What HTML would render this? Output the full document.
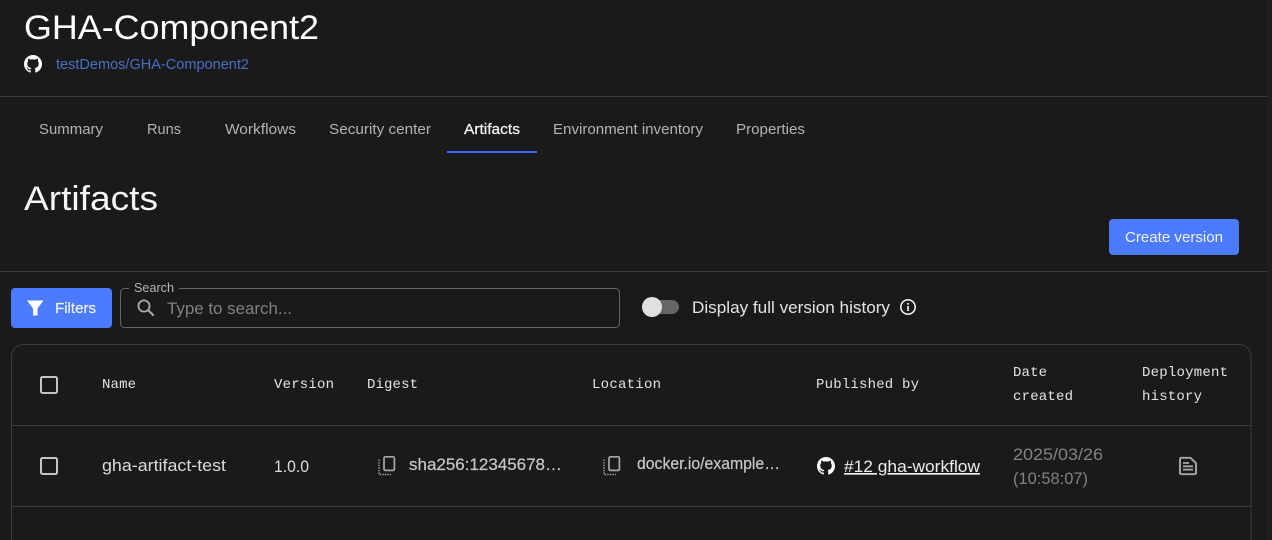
<!DOCTYPE html>
<html lang="en">
<head>
<meta charset="utf-8">
<title>Artifacts</title>
<style>
html,body{margin:0;padding:0;background:#1a1a1a;width:1272px;height:540px;overflow:hidden}
svg{display:block}
text{font-family:"Liberation Sans",Arial,sans-serif}
.m{font-family:"Liberation Mono",monospace;font-size:14px;fill:#e4e4e4}
.tab{font-size:14.7px;fill:#b4b4b4}
.cell{font-size:16.8px;fill:#dcdcdc}
.gray{font-size:16.8px;fill:#828282}
</style>
</head>
<body>
<svg width="1272" height="540" viewBox="0 0 1272 540" xmlns="http://www.w3.org/2000/svg">
<defs>
<symbol id="gh" viewBox="0 0 16 16"><path fill="#fff" d="M8 0C3.58 0 0 3.58 0 8c0 3.54 2.29 6.53 5.47 7.59.4.07.55-.17.55-.38 0-.19-.01-.82-.01-1.49-2.01.37-2.53-.49-2.69-.94-.09-.23-.48-.94-.82-1.13-.28-.15-.68-.52-.01-.53.63-.01 1.08.58 1.23.82.72 1.21 1.87.87 2.33.66.07-.52.28-.87.51-1.07-1.78-.2-3.64-.89-3.64-3.95 0-.87.31-1.59.82-2.15-.08-.2-.36-1.02.08-2.12 0 0 .67-.21 2.2.82.64-.18 1.32-.27 2-.27s1.36.09 2 .27c1.53-1.04 2.2-.82 2.2-.82.44 1.1.16 1.92.08 2.12.51.56.82 1.27.82 2.15 0 3.07-1.87 3.75-3.65 3.95.29.25.54.73.54 1.48 0 1.07-.01 1.93-.01 2.2 0 .21.15.46.55.38A8.013 8.013 0 0016 8c0-4.42-3.58-8-8-8z"/></symbol>
<g id="copy">
<rect x="384" y="456.8" width="10.4" height="13.6" rx="1.4" fill="none" stroke="#a8a8a8" stroke-width="1.7"/>
<path d="M379 459.5V474.5H391" fill="none" stroke="#a8a8a8" stroke-width="1.4" stroke-dasharray="1.4 1.2"/>
</g>
</defs>

<rect x="1267" y="0" width="5" height="540" fill="#1e1f20"/>

<text x="24" y="39" font-size="34.5" fill="#fff" textLength="295" lengthAdjust="spacingAndGlyphs">GHA-Component2</text>
<use href="#gh" x="24" y="55" width="18" height="18"/>
<text x="56" y="69" font-size="14.7" fill="#4a71c6" textLength="193" lengthAdjust="spacingAndGlyphs">testDemos/GHA-Component2</text>

<rect x="0" y="96" width="1267" height="1" fill="#3c3c3c"/>

<text class="tab" x="39" y="134" textLength="64" lengthAdjust="spacingAndGlyphs">Summary</text>
<text class="tab" x="147" y="134" textLength="34" lengthAdjust="spacingAndGlyphs">Runs</text>
<text class="tab" x="225" y="134" textLength="71" lengthAdjust="spacingAndGlyphs">Workflows</text>
<text class="tab" x="329" y="134" textLength="102" lengthAdjust="spacingAndGlyphs">Security center</text>
<text class="tab" x="464" y="134" textLength="56" lengthAdjust="spacingAndGlyphs" style="fill:#f4f4f4;stroke:#f4f4f4;stroke-width:.25">Artifacts</text>
<text class="tab" x="553" y="134" textLength="150" lengthAdjust="spacingAndGlyphs">Environment inventory</text>
<text class="tab" x="736" y="134" textLength="69" lengthAdjust="spacingAndGlyphs">Properties</text>
<rect x="447" y="151" width="90" height="2" fill="#3d69ea"/>

<text x="24" y="210" font-size="34.5" fill="#f6f6f6" textLength="134" lengthAdjust="spacingAndGlyphs">Artifacts</text>

<rect x="1109" y="219" width="130" height="36" rx="4" fill="#4d7bff"/>
<text x="1125" y="242" font-size="14.7" fill="#eef2ff" textLength="98" lengthAdjust="spacingAndGlyphs">Create version</text>

<rect x="0" y="271" width="1267" height="1" fill="#3c3c3c"/>

<rect x="11" y="288" width="101" height="40" rx="4" fill="#4d7bff"/>
<path d="M27 300.5H43.5L37.5 308.5V315.5H33V308.5Z" fill="#fff"/>
<text x="55" y="313" font-size="14.7" fill="#eef2ff" textLength="41" lengthAdjust="spacingAndGlyphs" style="stroke:#eef2ff;stroke-width:.2">Filters</text>

<path d="M129 288.5H124.5a4 4 0 0 0-4 4V323.5a4 4 0 0 0 4 4H615.5a4 4 0 0 0 4-4V292.5a4 4 0 0 0-4-4H179" fill="none" stroke="#666" stroke-width="1"/>
<text x="134" y="292" font-size="12.5" fill="#b4b4b4" textLength="40" lengthAdjust="spacingAndGlyphs">Search</text>
<circle cx="144" cy="306" r="5.6" fill="none" stroke="#aaa" stroke-width="1.8"/>
<path d="M148 310L153.7 315.6" stroke="#aaa" stroke-width="2" fill="none"/>
<text x="167" y="314" font-size="16.8" fill="#828282" textLength="125" lengthAdjust="spacingAndGlyphs">Type to search...</text>

<rect x="642" y="300" width="37" height="14" rx="7" fill="#666"/>
<circle cx="652" cy="307" r="10" fill="#e0e0e0"/>
<text x="692" y="313" font-size="16.8" fill="#e4e4e4" textLength="198" lengthAdjust="spacingAndGlyphs">Display full version history</text>
<circle cx="908" cy="307" r="7.2" fill="none" stroke="#eee" stroke-width="1.6"/>
<rect x="907.2" y="306" width="1.7" height="5" fill="#eee"/>
<rect x="907.2" y="303" width="1.7" height="1.7" fill="#eee"/>

<path d="M11.5 540V356.5a12 12 0 0 1 12-12H1239a12 12 0 0 1 12 12V540" fill="none" stroke="#3c3c3c" stroke-width="1"/>
<rect x="12" y="425" width="1239" height="1" fill="#3c3c3c"/>
<rect x="12" y="506" width="1239" height="1" fill="#3c3c3c"/>

<rect x="41" y="377" width="16" height="16" rx="1.5" fill="none" stroke="#c4c4c4" stroke-width="2"/>
<text class="m" x="102" y="388" textLength="34">Name</text>
<text class="m" x="274" y="388" textLength="60">Version</text>
<text class="m" x="367" y="388" textLength="51">Digest</text>
<text class="m" x="592" y="388" textLength="69">Location</text>
<text class="m" x="816" y="388" textLength="103">Published by</text>
<text class="m" x="1013" y="376" textLength="34">Date</text>
<text class="m" x="1013" y="400" textLength="60">created</text>
<text class="m" x="1142" y="376" textLength="86">Deployment</text>
<text class="m" x="1142" y="400" textLength="60">history</text>

<rect x="41" y="458" width="16" height="16" rx="1.5" fill="none" stroke="#c4c4c4" stroke-width="2"/>
<text class="cell" x="102" y="471" textLength="124" lengthAdjust="spacingAndGlyphs">gha-artifact-test</text>
<text class="cell" x="274" y="472" textLength="35" lengthAdjust="spacingAndGlyphs">1.0.0</text>
<use href="#copy"/>
<text class="cell" x="409" y="470" textLength="153" lengthAdjust="spacingAndGlyphs" style="fill:#c8c8c8;stroke:#c8c8c8;stroke-width:.2">sha256:12345678…</text>
<use href="#copy" x="225"/>
<text class="cell" x="637" y="469" textLength="143" lengthAdjust="spacingAndGlyphs" style="fill:#c8c8c8;stroke:#c8c8c8;stroke-width:.2">docker.io/example…</text>
<use href="#gh" x="817" y="457" width="18" height="18"/>
<text class="cell" x="844" y="472" textLength="136" lengthAdjust="spacingAndGlyphs" text-decoration="underline" style="fill:#ececec">#12 gha-workflow</text>
<text class="gray" x="1013" y="460" textLength="90" lengthAdjust="spacingAndGlyphs">2025/03/26</text>
<text class="gray" x="1013" y="484" textLength="75" lengthAdjust="spacingAndGlyphs">(10:58:07)</text>
<path d="M1180 459a1.2 1.2 0 0 1 1.2-1.2H1190.5L1196 463.2V473a1.2 1.2 0 0 1-1.2 1.2H1181.2a1.2 1.2 0 0 1-1.2-1.2Z" fill="none" stroke="#a8a8a8" stroke-width="1.9"/>
<path d="M1183 463H1189M1183 466.3H1193M1183 469.6H1193" stroke="#a8a8a8" stroke-width="1.8" fill="none"/>
</svg>
</body>
</html>
